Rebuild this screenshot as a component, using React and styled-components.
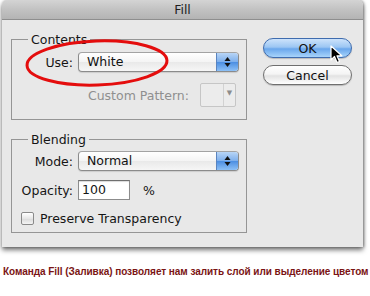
import React from "react";
import styled, { createGlobalStyle } from "styled-components";

const GlobalStyle = createGlobalStyle`
  html, body {
    margin: 0;
    padding: 0;
    background: #ffffff;
  }
  body {
    font-family: "DejaVu Sans", "Liberation Sans", sans-serif;
  }
`;

const Page = styled.div`
  width: 370px;
  height: 296px;
  padding-left: 2px;
  box-sizing: border-box;
  overflow: hidden;
`;

const Dialog = styled.div`
  position: relative;
  width: 361px;
  background: #e8e8e8;
  border-radius: 5px 5px 0 0;
  box-shadow: 0 3px 5px rgba(0, 0, 0, 0.55), 1px 0 3px rgba(0, 0, 0, 0.35);
`;

const TitleBar = styled.div`
  height: 20px;
  display: flex;
  align-items: center;
  justify-content: center;
  border-radius: 5px 5px 0 0;
  background: linear-gradient(#d4d4d4, #c2c2c2 50%, #b4b4b4);
  border-bottom: 1px solid #8e8e8e;
  box-sizing: border-box;
  font-size: 12.5px;
  color: #1e1e1e;
`;

const Body = styled.div`
  display: flex;
  padding: 12px 0 14px 9px;
  font-size: 12.5px;
  color: #151515;
`;

const LeftColumn = styled.div`
  display: flex;
  flex-direction: column;
  gap: 12px;
  width: 236px;
`;

const Group = styled.fieldset`
  margin: 0;
  padding: 0 0 ${(p) => p.$bottom}px 0;
  width: 236px;
  box-sizing: border-box;
  border: 1px solid #959595;
  min-inline-size: 0;
`;

const Legend = styled.legend`
  margin-left: 16px;
  padding: 0 3px;
  line-height: 15px;
  font-size: 12.5px;
  color: #151515;
`;

const FieldRow = styled.div`
  display: grid;
  grid-template-columns: 61px auto;
  column-gap: 5px;
  align-items: center;
  margin-top: ${(p) => p.$top}px;
`;

const Label = styled.span`
  text-align: right;
  white-space: nowrap;
  color: ${(p) => (p.$disabled ? "#8f8f8f" : "#151515")};
`;

const Select = styled.div`
  width: 161px;
  height: 20px;
  display: flex;
  box-sizing: border-box;
  border: 1px solid #8b8b8b;
  border-top-color: #a3a3a3;
  border-radius: 4px;
  overflow: hidden;
  background: linear-gradient(#ffffff, #f4f4f4 50%, #e9e9e9 51%, #f6f6f6);
  box-shadow: 0 1px 1px rgba(0, 0, 0, 0.12);
`;

const SelectValue = styled.span`
  flex: 1;
  padding-left: 8px;
  line-height: 18px;
  color: #111;
`;

const SelectArrows = styled.span`
  width: 21px;
  display: flex;
  align-items: center;
  justify-content: center;
  border-left: 1px solid #5a84bf;
  background: linear-gradient(#b8d5f6, #7fb0ec 48%, #4d8fe2 52%, #8dc0f6);
`;

const PatternRow = styled.div`
  display: flex;
  justify-content: flex-end;
  align-items: center;
  gap: 11px;
  margin-top: 11px;
  padding-right: 10px;
`;

const Swatch = styled.div`
  width: 36px;
  height: 24px;
  display: flex;
  box-sizing: border-box;
  border: 1px solid #c6c6c6;
  border-radius: 2px;
  background: #ececec;
`;

const SwatchFill = styled.div`
  flex: 1;
`;

const SwatchArrow = styled.div`
  width: 11px;
  display: flex;
  align-items: flex-start;
  justify-content: center;
  padding-top: 5px;
  border-left: 1px solid #d2d2d2;
  font-size: 7px;
  color: #8c8c8c;
`;

const NumberInput = styled.div`
  display: flex;
  align-items: center;
  gap: 13px;
`;

const InputBox = styled.div`
  width: 52px;
  height: 20px;
  box-sizing: border-box;
  border: 1px solid #8c8c8c;
  border-top-color: #6f6f6f;
  background: #fff;
  padding-left: 3px;
  line-height: 18px;
  box-shadow: inset 0 1px 1px rgba(0, 0, 0, 0.15);
`;

const CheckRow = styled.label`
  display: flex;
  align-items: center;
  gap: 6px;
  padding-left: 9px;
  margin-top: 11px;
`;

const CheckBox = styled.span`
  width: 13px;
  height: 13px;
  box-sizing: border-box;
  border: 1px solid #8a8a8a;
  border-radius: 2px;
  background: linear-gradient(#ffffff, #e6e6e6 50%, #d9d9d9 51%, #f4f4f4);
`;

const RightColumn = styled.div`
  display: flex;
  flex-direction: column;
  gap: 7px;
  margin-left: 16px;
  padding-top: 6px;
`;

const Button = styled.div`
  width: 89px;
  height: 20px;
  box-sizing: border-box;
  border-radius: 10px;
  display: flex;
  align-items: center;
  justify-content: center;
  font-size: 12.5px;
  color: #111;
  border: 1px solid ${(p) => (p.$primary ? "#3f6cae" : "#6f6f6f")};
  background: ${(p) =>
    p.$primary
      ? "linear-gradient(#cde3fb, #9cc6f3 45%, #6aa7ec 55%, #a8d4fb)"
      : "linear-gradient(#ffffff, #f4f4f4 45%, #e2e2e2 55%, #ffffff)"};
  box-shadow: 0 1px 1px rgba(0, 0, 0, 0.2);
`;

const Overlay = styled.svg`
  position: absolute;
  pointer-events: none;
  left: ${(p) => p.$x}px;
  top: ${(p) => p.$y}px;
`;

const Caption = styled.div`
  margin-top: 19px;
  margin-left: 1px;
  font-family: "Liberation Sans", Arial, sans-serif;
  font-size: 10px;
  font-weight: bold;
  letter-spacing: -0.05px;
  line-height: 12px;
  color: #7a1414;
  white-space: nowrap;
`;

const UpDown = () => (
  <svg width="7" height="12" viewBox="0 0 7 12">
    <path d="M3.5 1 L6.5 5 L0.5 5 Z" fill="#111" />
    <path d="M3.5 11 L6.5 7 L0.5 7 Z" fill="#111" />
  </svg>
);

const DropDown = ({ value }) => (
  <Select>
    <SelectValue>{value}</SelectValue>
    <SelectArrows>
      <UpDown />
    </SelectArrows>
  </Select>
);

export default function App() {
  return (
    <Page>
      <GlobalStyle />
      <Dialog>
        <TitleBar>Fill</TitleBar>
        <Body>
          <LeftColumn>
            <Group $bottom={12}>
              <Legend>Contents</Legend>
              <FieldRow $top={5}>
                <Label>Use:</Label>
                <DropDown value="White" />
              </FieldRow>
              <PatternRow>
                <Label $disabled>Custom Pattern:</Label>
                <Swatch>
                  <SwatchFill />
                  <SwatchArrow>▼</SwatchArrow>
                </Swatch>
              </PatternRow>
            </Group>
            <Group $bottom={6}>
              <Legend>Blending</Legend>
              <FieldRow $top={4}>
                <Label>Mode:</Label>
                <DropDown value="Normal" />
              </FieldRow>
              <FieldRow $top={9}>
                <Label>Opacity:</Label>
                <NumberInput>
                  <InputBox>100</InputBox>
                  <span>%</span>
                </NumberInput>
              </FieldRow>
              <CheckRow>
                <CheckBox />
                <span>Preserve Transparency</span>
              </CheckRow>
            </Group>
          </LeftColumn>
          <RightColumn>
            <Button $primary>OK</Button>
            <Button>Cancel</Button>
          </RightColumn>
        </Body>
        <Overlay $x={22} $y={38} width="146" height="50" viewBox="0 0 146 50">
          <ellipse
            cx="73"
            cy="25"
            rx="70"
            ry="22"
            fill="none"
            stroke="#e40d0d"
            strokeWidth="3"
            transform="rotate(-2 73 25)"
          />
        </Overlay>
        <Overlay $x={327} $y={45} width="14" height="20" viewBox="0 0 14 20">
          <path
            d="M2 1 L2 15 L5.5 11.5 L8 17.5 L10.5 16.5 L8 10.8 L12.8 10.8 Z"
            fill="#000"
            stroke="#fff"
            strokeWidth="1.2"
            strokeLinejoin="round"
          />
        </Overlay>
      </Dialog>
      <Caption>
        Команда Fill (Заливка) позволяет нам залить слой или выделение цветом
      </Caption>
    </Page>
  );
}
